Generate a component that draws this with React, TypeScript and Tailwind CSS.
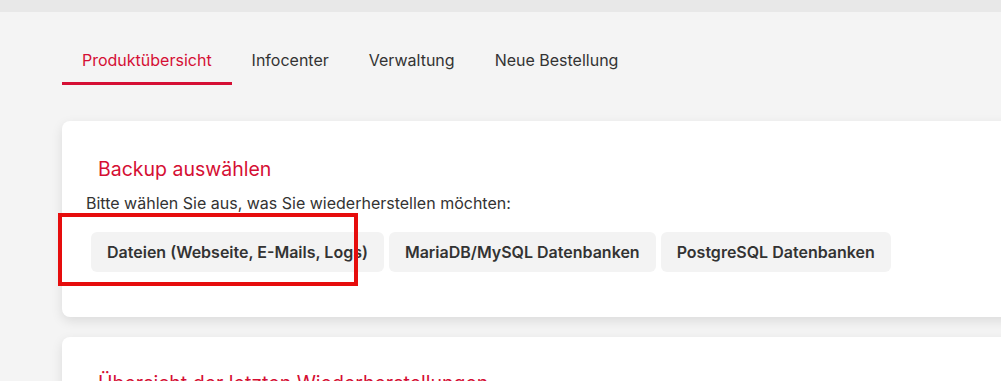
import React from 'react';

const tabs = ['Produktübersicht', 'Infocenter', 'Verwaltung', 'Neue Bestellung'];
const choices = ['Dateien (Webseite, E-Mails, Logs)', 'MariaDB/MySQL Datenbanken', 'PostgreSQL Datenbanken'];

const App: React.FC = () => {
  return (
    <div className="h-[381px] overflow-hidden bg-[#f4f4f4] font-['Inter',sans-serif] text-[#333]">
      {/* Top bar */}
      <div className="h-[12px] bg-[#e8e8e8]" />

      <main className="pl-[62px] w-[1200px]">
        {/* Tabs */}
        <nav className="flex pt-[35px]">
          {tabs.map((t, i) => (
            <button
              key={t}
              className={`px-5 pt-[1px] pb-[10px] text-[16px] leading-[24px] border-b-[3px] ${
                i === 0 ? 'text-[#d50f34] border-[#d50f34]' : 'text-[#333] border-transparent'
              }`}
            >
              {t}
            </button>
          ))}
        </nav>

        {/* Backup card */}
        <section className="relative mt-[36px] bg-white rounded-lg shadow-[0_4px_12px_rgba(0,0,0,0.1)] px-6 pt-[34px] pb-[45px]">
          <h2 className="px-3 text-[19.5px] leading-[28px] text-[#d50f34]">Backup auswählen</h2>
          <p className="mt-[9px] text-[16px] leading-[22px]">Bitte wählen Sie aus, was Sie wiederherstellen möchten:</p>
          <div className="flex gap-[5px] mt-[18px] ml-[5px]">
            {choices.map((c) => (
              <button
                key={c}
                className="h-[40px] px-4 rounded-md bg-[#f3f3f3] text-[16px] font-semibold text-[#333]"
              >
                {c}
              </button>
            ))}
          </div>
          {/* Annotation box */}
          <div className="absolute left-[-4px] top-[92px] w-[300px] h-[73px] border-4 border-[#e60d0d]" />
        </section>

        {/* Restore overview card */}
        <section className="mt-[20px] bg-white rounded-lg shadow-[0_4px_12px_rgba(0,0,0,0.1)] px-6 pt-[32px] pb-10">
          <h2 className="px-3 text-[19.5px] leading-[28px] text-[#d50f34]">Übersicht der letzten Wiederherstellungen</h2>
        </section>
      </main>
    </div>
  );
};

export default App;
